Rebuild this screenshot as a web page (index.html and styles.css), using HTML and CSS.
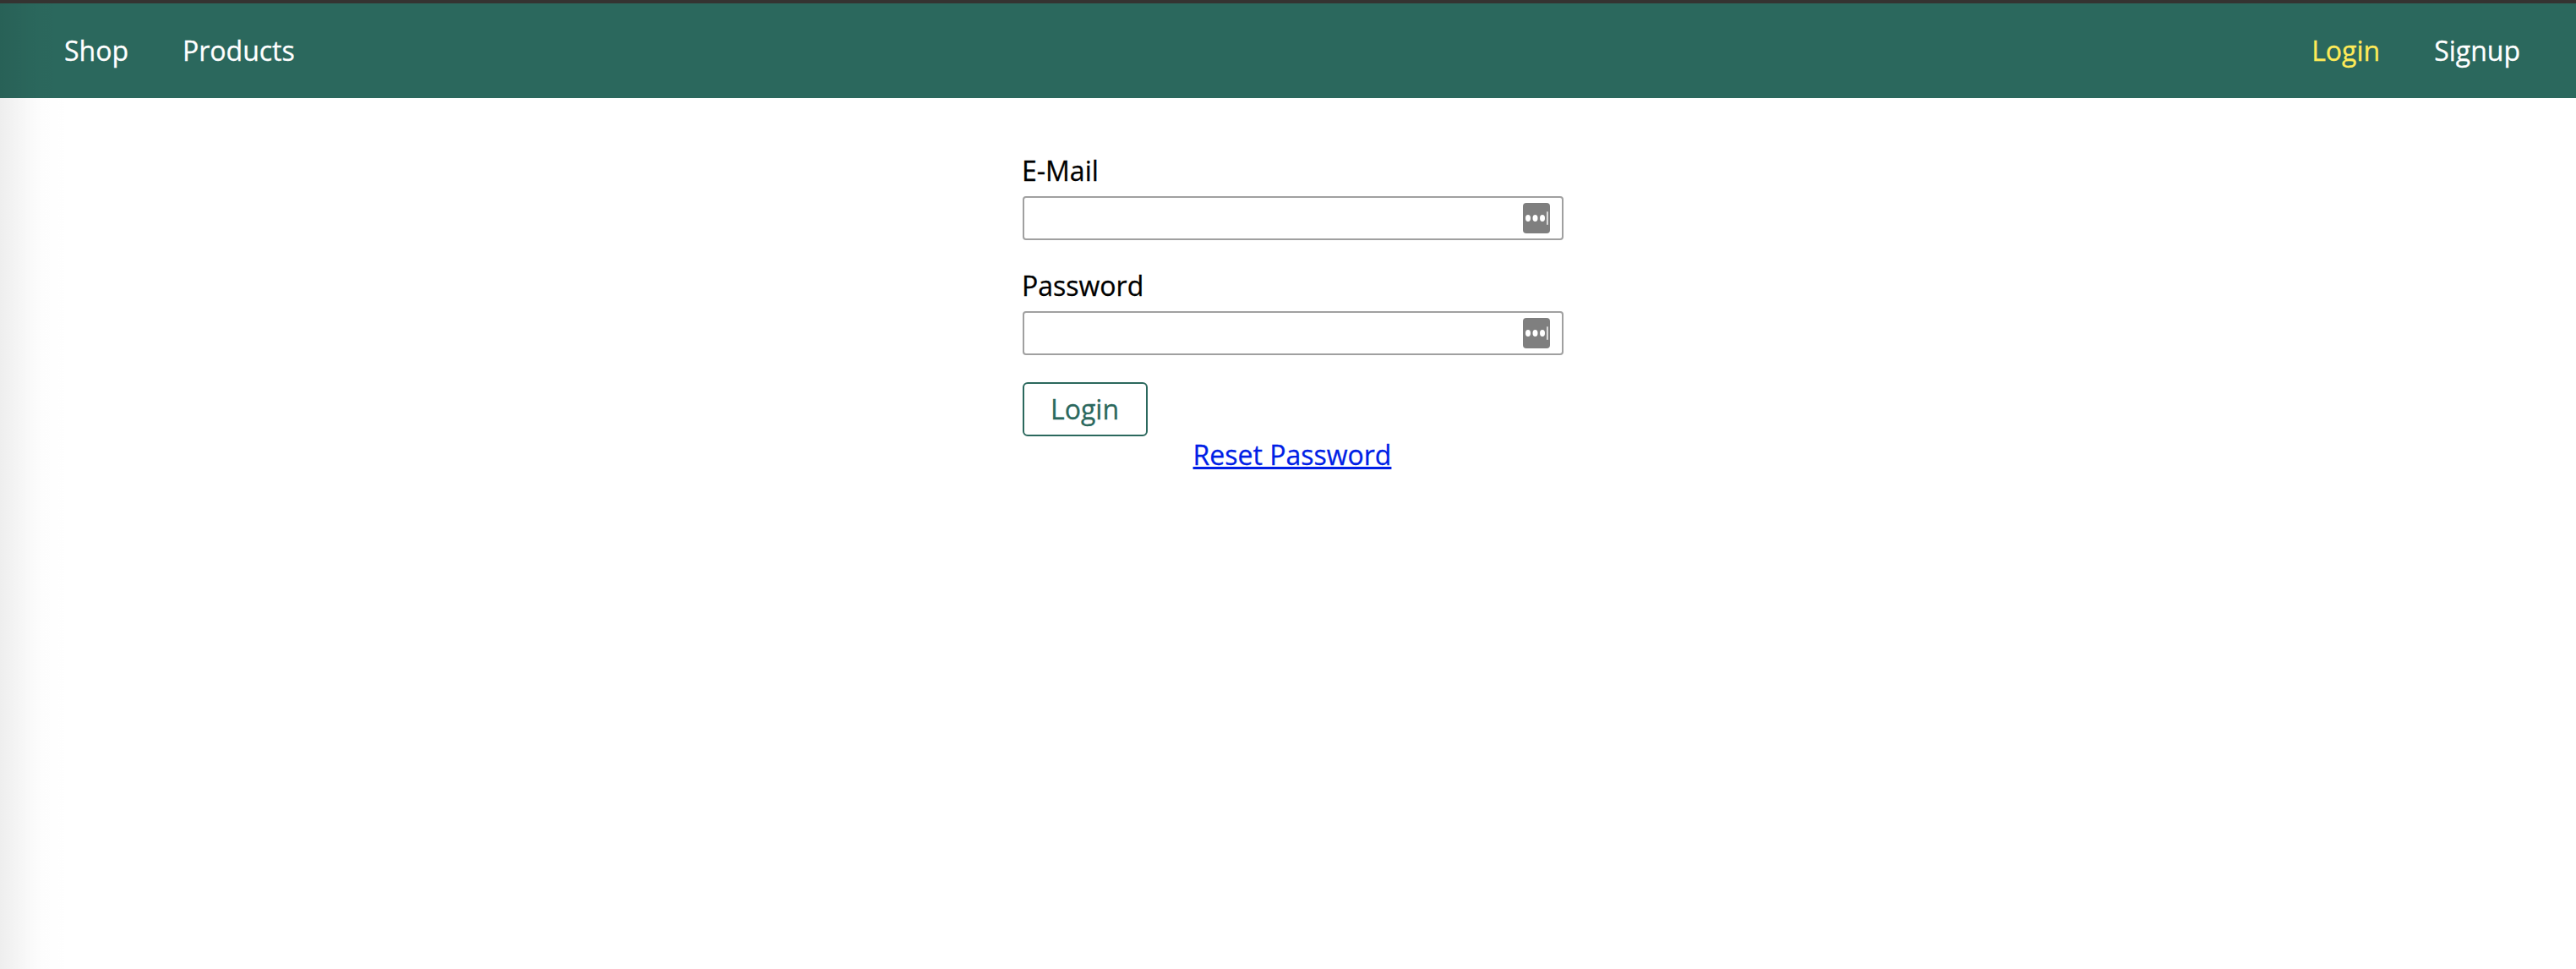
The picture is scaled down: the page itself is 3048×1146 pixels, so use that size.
FILE: index.html
```html
<!DOCTYPE html>
<html lang="en">
<head>
<meta charset="UTF-8">
<title>Login</title>
<link rel="stylesheet" href="styles.css">
</head>
<body>
<header class="main-header">
  <nav class="main-nav">
    <ul class="nav-list">
      <li><a href="#">Shop</a></li>
      <li><a href="#">Products</a></li>
    </ul>
    <ul class="nav-list">
      <li><a class="active" href="#">Login</a></li>
      <li><a href="#">Signup</a></li>
    </ul>
  </nav>
</header>
<main>
  <form class="login-form">
    <div class="form-control">
      <label for="email">E-Mail</label>
      <div class="field">
        <input type="email" id="email">
        <svg class="key-icon" viewBox="0 0 32 36"><rect width="32" height="36" rx="4" fill="#7f7f7f"/><g fill="#fff"><ellipse cx="6" cy="18" rx="3" ry="4"/><ellipse cx="14.5" cy="18" rx="3" ry="4"/><ellipse cx="23" cy="18" rx="3" ry="4"/><rect x="28.2" y="10.3" width="1.4" height="15.5"/></g></svg>
      </div>
    </div>
    <div class="form-control">
      <label for="password">Password</label>
      <div class="field">
        <input type="password" id="password">
        <svg class="key-icon" viewBox="0 0 32 36"><rect width="32" height="36" rx="4" fill="#7f7f7f"/><g fill="#fff"><ellipse cx="6" cy="18" rx="3" ry="4"/><ellipse cx="14.5" cy="18" rx="3" ry="4"/><ellipse cx="23" cy="18" rx="3" ry="4"/><rect x="28.2" y="10.3" width="1.4" height="15.5"/></g></svg>
      </div>
    </div>
    <button class="btn" type="button">Login</button>
  </form>
  <div class="centered"><a class="reset" href="#">Reset Password</a></div>
</main>
<div class="edge-shadow"></div>
</body>
</html>
```
FILE: styles.css
```css
* { box-sizing: border-box; }
body {
  margin: 0;
  min-height: 1146px;
  background: #fff;
  color: #000;
  font: 32px/44px "Open Sans", sans-serif;
  -webkit-text-stroke: 0.3px;
}
.main-header {
  height: 116px;
  border-top: 4px solid #242424;
  border-image: linear-gradient(#353331 50%, #242321 50%) 4 0 0 0;
  background: #2b685d;
  padding: 0 34px 0 44px;
}
.main-nav {
  height: 100%;
  display: flex;
  align-items: center;
  justify-content: space-between;
}
.nav-list {
  list-style: none;
  margin: 0;
  padding: 0;
  display: flex;
}
.nav-list li { padding: 0 32px; }
.nav-list a { color: #fff; text-decoration: none; }
.nav-list .active { color: #ffeb58; }
main { padding: 64px 0 0 12px; }
.login-form { width: 640px; margin: 0 auto; }
.form-control { margin-bottom: 32px; }
label { display: block; margin: 0 0 8px -1px; }
.field { position: relative; height: 52px; }
input {
  display: block;
  width: 100%;
  height: 52px;
  border: 2px solid #a0a0a0;
  border-radius: 4px;
  background: #fff;
  padding: 4px 48px 4px 4px;
  font: inherit;
}
.key-icon { position: absolute; right: 16px; top: 8px; width: 32px; height: 36px; }
.btn {
  display: block;
  width: 148px;
  height: 64px;
  border: 2px solid #2b685d;
  border-radius: 6px;
  background: #fff;
  color: #2b685d;
  font: inherit;
  padding: 0 1px 0 0;
}
.centered { text-align: center; padding-right: 2px; }
.reset { color: #001ee6; }
.edge-shadow {
  position: absolute;
  left: 0;
  top: 4px;
  width: 84px;
  height: 1142px;
  background: linear-gradient(to right, rgba(0,0,0,.065), rgba(0,0,0,.048) 20%, rgba(0,0,0,.022) 40%, rgba(0,0,0,.009) 60%, rgba(0,0,0,.004) 80%, transparent);
  pointer-events: none;
}
```
